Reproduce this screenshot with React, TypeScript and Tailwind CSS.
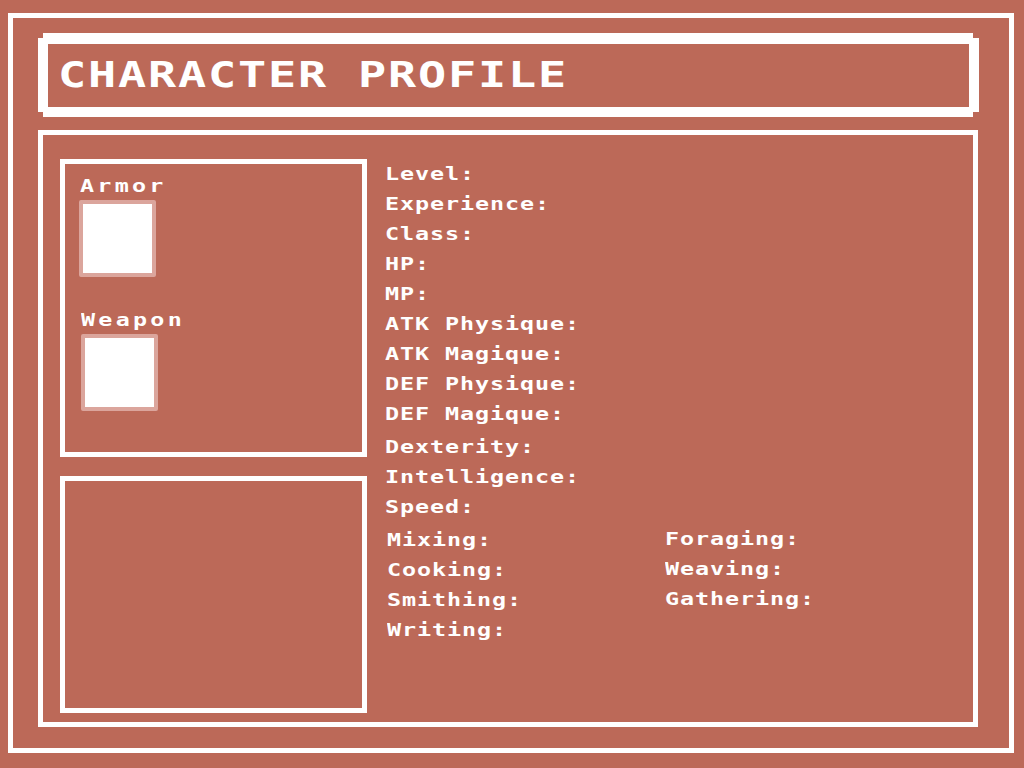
const mono = "font-['DejaVu_Sans_Mono','Liberation_Mono',monospace] font-bold text-white block w-max origin-left scale-x-[1.3] whitespace-nowrap"

const coreStats = [
    "Level:",
    "Experience:",
    "Class:",
    "HP:",
    "MP:",
    "ATK Physique:",
    "ATK Magique:",
    "DEF Physique:",
    "DEF Magique:",
]

const attrStats = ["Dexterity:", "Intelligence:", "Speed:"]

// left/right columns read row by row
const skills = [
    ["Mixing:", "Foraging:"],
    ["Cooking:", "Weaving:"],
    ["Smithing:", "Gathering:"],
    ["Writing:", ""],
]

function Slot({ label, shift }: { label: string; shift?: boolean }) {
    return (
        <div className={shift ? "pl-[16px]" : "pl-[14px]"}>
            <span className={`${mono} text-[18px] leading-[18px] tracking-[2.5px] ${shift ? "" : "ml-[1px]"}`}>{label}</span>
            <div className="mt-[5px] w-[77px] h-[77px] bg-white border-[4px] border-[#dba59c] rounded-[2px]" />
        </div>
    )
}

function StatLine({ text }: { text: string }) {
    return <span className={`${mono} h-[30px] text-[18px] leading-[30px] tracking-[0.7px]`}>{text}</span>
}

export default function App() {
    return (
        <div className="w-[1024px] h-[768px] bg-[#bc6958] pt-[13px] pl-[8px] overflow-hidden">
            <div className="w-[1006px] h-[740px] border-[5px] border-white pl-[25px] pt-[15px]">
                {/* title bar with notched pixel corners */}
                <div className="flex h-[84px] w-[941px]">
                    <div className="w-[5px] my-[5px] bg-white" />
                    <div className="flex-1 border-t-[11px] border-b-[10px] border-l-[5px] border-r-[4px] border-white pl-[10px] pt-[13px]">
                        <span className={`${mono} text-[36px] leading-[36px] tracking-[1.4px]`}>CHARACTER PROFILE</span>
                    </div>
                    <div className="w-[6px] my-[5px] bg-white" />
                </div>

                <div className="mt-[13px] w-[940px] h-[597px] border-[5px] border-white flex pl-[17px] pt-[24px]">
                    <div className="w-[307px] flex flex-col gap-[19px]">
                        <div className="h-[298px] border-[5px] border-white pt-[13px]">
                            <Slot label="Armor" />
                            <div className="mt-[34px]">
                                <Slot label="Weapon" shift />
                            </div>
                        </div>
                        <div className="h-[237px] border-[5px] border-white" />
                    </div>

                    <div className="ml-[18px] flex flex-col">
                        <div>
                            {coreStats.map((s) => (
                                <StatLine key={s} text={s} />
                            ))}
                        </div>
                        <div className="mt-[3px]">
                            {attrStats.map((s) => (
                                <StatLine key={s} text={s} />
                            ))}
                        </div>
                        <div className="mt-[3px] ml-[2px] grid grid-cols-[278px_auto]">
                            {skills.map(([a, b]) => (
                                <div key={a} className="contents">
                                    <StatLine text={a} />
                                    <div className="-mt-[1px]">{b ? <StatLine text={b} /> : null}</div>
                                </div>
                            ))}
                        </div>
                    </div>
                </div>
            </div>
        </div>
    )
}
